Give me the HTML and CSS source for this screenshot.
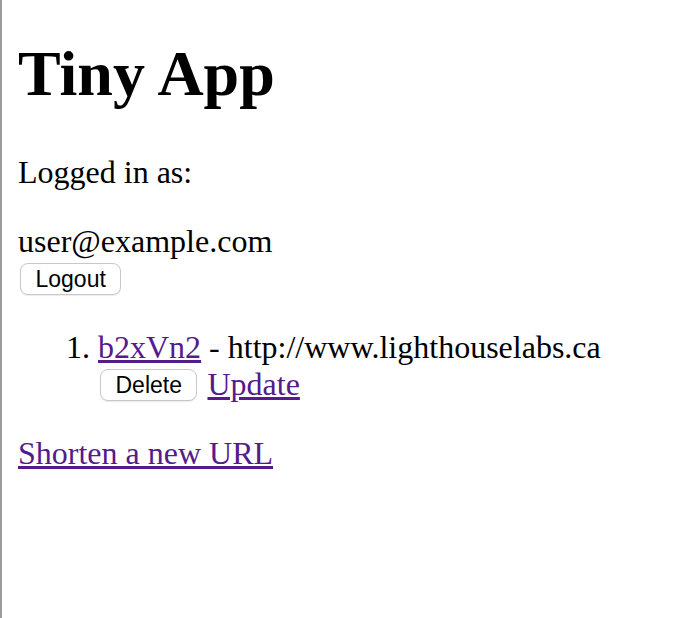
FILE: index.html
```html
<!DOCTYPE html>
<html>
<head>
<meta charset="utf-8">
<title>Tiny App</title>
<link rel="stylesheet" href="styles.css">
</head>
<body>
<h1 class="title">Tiny App</h1>
<p class="label">Logged in as:</p>
<div class="user">user@example.com</div>
<form class="form"><button type="button" class="btn">Logout</button></form>
<ol class="urls">
  <li class="url-item"><a class="link" href="#">b2xVn2</a> - http://www.lighthouselabs.ca
    <form class="form"><button type="button" class="btn">Delete</button> <a class="link" href="#">Update</a></form>
  </li>
</ol>
<a class="link" href="#">Shorten a new URL</a>
</body>
</html>
```

FILE: styles.css
```css
html {
  border-left: 2px solid #9c9c9c;
  min-height: 100%;
  box-sizing: border-box;
}
body {
  margin: 0 16px 16px;
  font-family: "Liberation Serif", "Times New Roman", serif;
  font-size: 32px;
  color: #000;
}
.title {
  font-size: 64px;
  font-weight: bold;
  margin: 36.5px 0 43px;
}
.label {
  margin: 32px 0;
}
.form {
  margin: 0;
}
.btn {
  box-sizing: border-box;
  font-family: "Liberation Sans", Arial, sans-serif;
  font-size: 23px;
  height: 32px;
  padding: 2px 14.5px 0;
  margin: 0 2px;
  background: #fff;
  color: #000;
  border: 1px solid #c8c8c8;
  border-radius: 8px;
  box-shadow: 0 1px 1px rgba(0,0,0,0.08);
  vertical-align: 1.5px;
}
.urls {
  margin: 32px 0;
  padding-left: 80px;
}
.link {
  color: #551a8b;
}
```
